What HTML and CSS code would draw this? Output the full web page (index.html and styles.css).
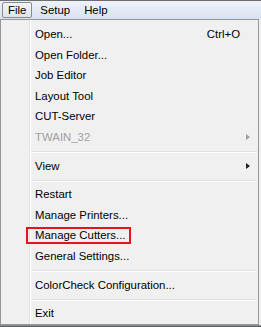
FILE: index.html
```html
<!DOCTYPE html>
<html lang="en">
<head>
    <meta charset="UTF-8">
    <meta name="viewport" content="width=device-width, initial-scale=1.0">
    <title>File menu</title>
    <link rel="stylesheet" href="styles.css">
</head>
<body>
    <div class="window">
        <!-- menu bar -->
        <div class="menubar">
            <span class="top-item active">File</span>
            <span class="top-item">Setup</span>
            <span class="top-item">Help</span>
        </div>

        <!-- File dropdown -->
        <div class="dropdown">
            <div class="item"><span>Open...</span><span class="key">Ctrl+O</span></div>
            <div class="item"><span>Open Folder...</span></div>
            <div class="item"><span>Job Editor</span></div>
            <div class="item"><span>Layout Tool</span></div>
            <div class="item"><span>CUT-Server</span></div>
            <div class="item off"><span>TWAIN_32</span><span class="arrow"></span></div>
            <div class="sep"></div>
            <div class="item"><span>View</span><span class="arrow"></span></div>
            <div class="sep"></div>
            <div class="item"><span>Restart</span></div>
            <div class="item"><span>Manage Printers...</span></div>
            <div class="item mark"><span>Manage Cutters...</span></div>
            <div class="item"><span>General Settings...</span></div>
            <div class="sep"></div>
            <div class="item"><span>ColorCheck Configuration...</span></div>
            <div class="sep"></div>
            <div class="item"><span>Exit</span></div>
        </div>
        <div class="below"></div>
    </div>
</body>
</html>
```

FILE: styles.css
```css
body{
    margin: 0;
    font-family: "Liberation Sans", Arial, sans-serif;
    font-size: 11.4px;
    color: #000;
    background: #f0f0f0;
}
.window{
    width: 261px;
    height: 327px;
    display: flex;
    flex-direction: column;
    overflow: hidden;
    background: #f0f0f0;
}
.menubar{
    height: 18px;
    border-top: 1px solid #6e6e6e;
    background: linear-gradient(#eef2fa, #d9e2f0);
    display: flex;
    align-items: center;
    gap: 2px;
    padding-left: 2px;
}
.top-item{
    padding: 0 5px;
    height: 14px;
    line-height: 14px;
    border: 1px solid transparent;
    border-radius: 2px;
}
.top-item.active{
    border-color: #8a8b8c;
    background: linear-gradient(#f4f5f7, #dfe3e9);
}
.dropdown{
    width: 259px;
    box-sizing: border-box;
    border: 1px solid #979797;
    padding-top: 4px;
    background: linear-gradient(to right, #f0f0f0 28px, #e2e3e3 28px, #e2e3e3 29px, #fff 29px, #fff 30px, #f0f0f0 30px);
}
.item{
    height: 20.5px;
    display: flex;
    align-items: center;
    padding: 0 8px 0 34px;
    position: relative;
}
.key{
    margin-left: auto;
    margin-right: 10px;
}
.arrow{
    margin-left: auto;
    width: 0;
    height: 0;
    border-left: 4px solid #222;
    border-top: 3.5px solid transparent;
    border-bottom: 3.5px solid transparent;
}
.item.off{
    color: #a0a0a0;
}
.item.off .arrow{
    border-left-color: #a0a0a0;
}
.sep{
    height: 8.25px;
    box-sizing: border-box;
    padding-top: 4px;
    margin: 0 1px 0 30px;
}
.sep::before{
    content: "";
    display: block;
    height: 1px;
    background: #e0e0e0;
    border-bottom: 1px solid #fff;
}
/* red highlight round Manage Cutters */
.mark::after{
    content: "";
    position: absolute;
    left: 25px;
    top: 2px;
    width: 105px;
    height: 17px;
    box-sizing: border-box;
    border: 2px solid #e3141c;
}
.below{
    flex: 1;
    border-top: 1px solid #8a8a8a;
    background: #5b6168;
}
```
